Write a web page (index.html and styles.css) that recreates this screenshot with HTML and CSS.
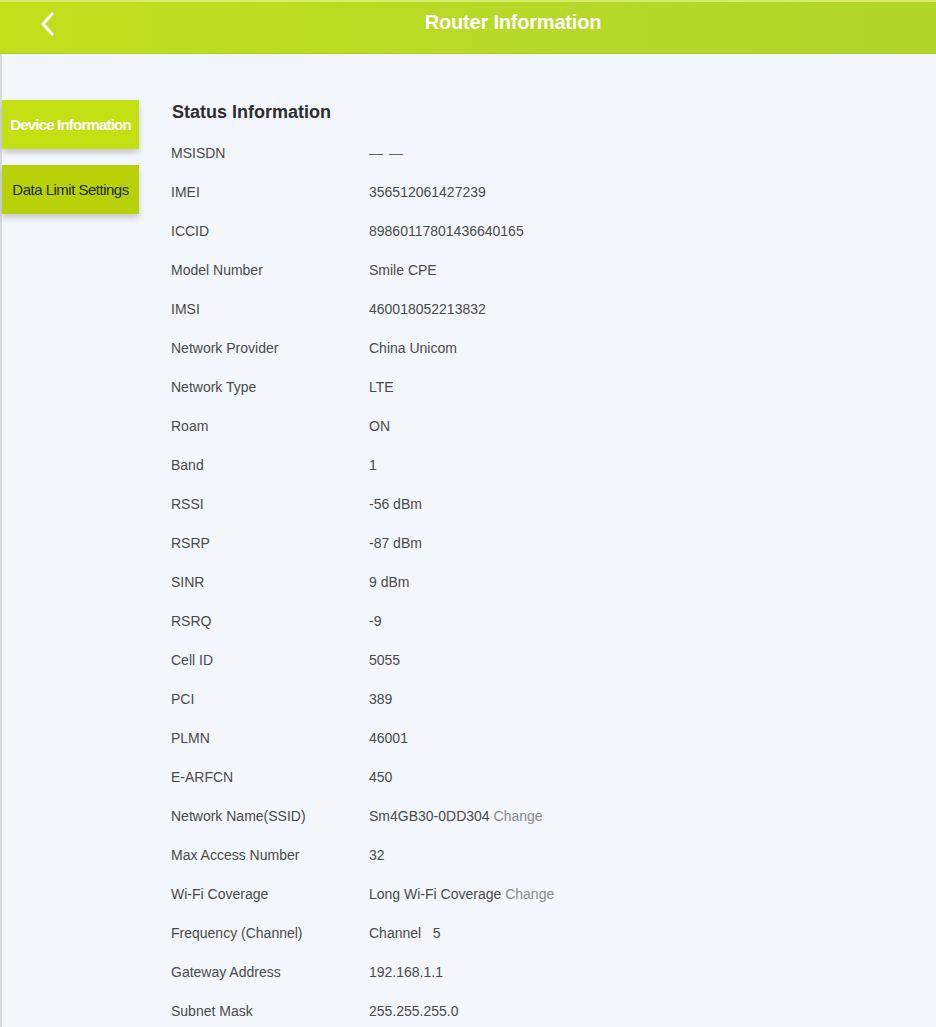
FILE: index.html
```html
<!DOCTYPE html>
<html lang="en">
<head>
  <meta charset="UTF-8">
  <meta name="viewport" content="width=device-width, initial-scale=1">
  <title>Router Information</title>
  <link rel="stylesheet" href="styles.css">
</head>
<body>
  <header class="topbar">
    <a class="back" href="#">
      <svg width="18" height="26" viewBox="0 0 18 26"><path d="M14 3 L5 13 L14 23" fill="none" stroke="#fff" stroke-width="3.2" stroke-linecap="round" stroke-linejoin="round"/></svg>
    </a>
    <h1>Router Information</h1>
  </header>

  <div class="page">
    <nav class="side">
      <button class="tab active">Device Information</button>
      <button class="tab">Data Limit Settings</button>
    </nav>

    <main class="info">
      <h2>Status Information</h2>
      <table>
        <tr><td>MSISDN</td><td><span class="dash">— —</span></td></tr>
        <tr><td>IMEI</td><td>356512061427239</td></tr>
        <tr><td>ICCID</td><td>89860117801436640165</td></tr>
        <tr><td>Model Number</td><td>Smile CPE</td></tr>
        <tr><td>IMSI</td><td>460018052213832</td></tr>
        <tr><td>Network Provider</td><td>China Unicom</td></tr>
        <tr><td>Network Type</td><td>LTE</td></tr>
        <tr><td>Roam</td><td>ON</td></tr>
        <tr><td>Band</td><td>1</td></tr>
        <tr><td>RSSI</td><td>-56 dBm</td></tr>
        <tr><td>RSRP</td><td>-87 dBm</td></tr>
        <tr><td>SINR</td><td>9 dBm</td></tr>
        <tr><td>RSRQ</td><td>-9</td></tr>
        <tr><td>Cell ID</td><td>5055</td></tr>
        <tr><td>PCI</td><td>389</td></tr>
        <tr><td>PLMN</td><td>46001</td></tr>
        <tr><td>E-ARFCN</td><td>450</td></tr>
        <tr><td>Network Name(SSID)</td><td>Sm4GB30-0DD304 <a class="change" href="#">Change</a></td></tr>
        <tr><td>Max Access Number</td><td>32</td></tr>
        <tr><td>Wi-Fi Coverage</td><td>Long Wi-Fi Coverage <a class="change" href="#">Change</a></td></tr>
        <tr><td>Frequency (Channel)</td><td>Channel&nbsp;&nbsp;&nbsp;5</td></tr>
        <tr><td>Gateway Address</td><td>192.168.1.1</td></tr>
        <tr><td>Subnet Mask</td><td>255.255.255.0</td></tr>
      </table>
    </main>
  </div>
</body>
</html>
```

FILE: styles.css
```css
body {
  margin: 0;
  font-family: "Liberation Sans", Arial, sans-serif;
  background: #f3f6fa;
  color: #4a4a4a;
}
.topbar {
  height: 54px;
  display: flex;
  align-items: center;
  background: linear-gradient(to right, #c3df1c, #b6d828 60%, #b2d52a);
  border-top: 2px solid #d8ec6a;
  border-bottom: 1px solid #a9c82c;
  box-sizing: border-box;
}
.back {
  display: flex;
  margin-left: 38px;
  margin-top: -8px;
}
.topbar h1 {
  flex: 1;
  margin: -10px 0 0 0;
  padding-left: 34px;
  text-align: center;
  font-size: 20px;
  font-weight: bold;
  color: #fff;
  letter-spacing: -0.2px;
}
.page {
  display: flex;
  gap: 32px;
  border-left: 2px solid #d6d9dd;
  min-height: 973px;
}
.side {
  display: flex;
  flex-direction: column;
  gap: 16px;
  padding-top: 46px;
}
.tab {
  width: 137px;
  height: 49px;
  border: none;
  padding: 0;
  font-family: inherit;
  font-size: 15px;
  letter-spacing: -0.5px;
  background: #b8d20a;
  color: #1e2a00;
  box-shadow: 0 4px 6px rgba(0, 0, 0, 0.18);
  cursor: pointer;
}
.tab.active {
  background: #c3e012;
  color: #fff;
  font-weight: bold;
  letter-spacing: -0.8px;
}
.info {
  padding-top: 48px;
}
.info h2 {
  margin: 0 0 10px 1px;
  font-size: 18px;
  line-height: 21px;
  color: #2e2e2e;
}
table {
  border-collapse: collapse;
  font-size: 14px;
}
td {
  height: 39px;
  padding: 0;
  vertical-align: middle;
}
td:first-child {
  width: 198px;
}
.dash {
  color: #666;
  letter-spacing: 1px;
}
.change {
  color: #8a8a8a;
  text-decoration: none;
}
```
